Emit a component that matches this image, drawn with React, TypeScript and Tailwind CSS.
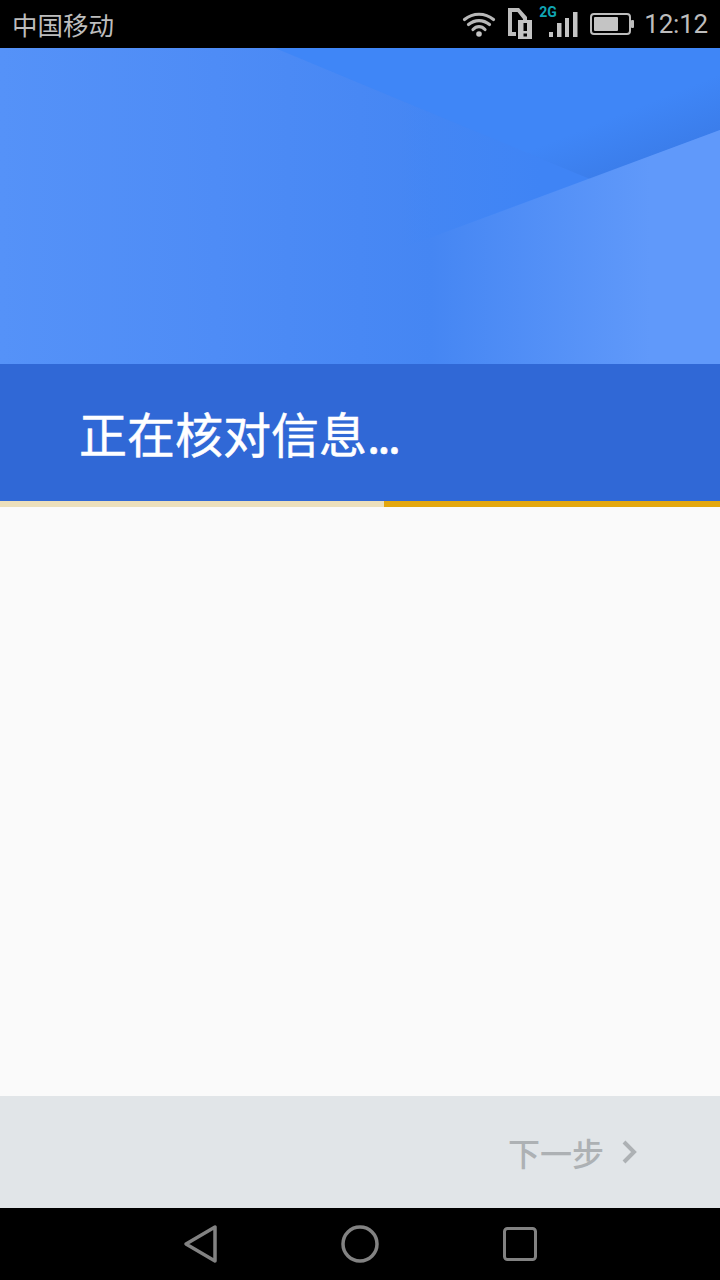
const cjk = "font-['Noto_Sans_CJK_SC','Roboto',sans-serif]";

// drawn with x measured from the left of the icon strip, which starts at 460
function StatusIcons() {
  return (
    <svg width="122" height="48" viewBox="0 0 122 48" fill="none" className="shrink-0">
      {/* wifi */}
      <g stroke="#b8b8b8" strokeWidth="3.200" strokeLinecap="round">
        <path d="M4.500 19.500c8.500-7 20.500-7 29 0" />
        <path d="M8.500 24.500c6.300-5.200 14.700-5.200 21 0" />
        <path d="M13 29.500c3.600-3.800 8.400-3.800 12 0" />
      </g>
      <circle cx="19" cy="34" r="2.800" fill="#c4c4c4" />
      {/* sim with alert */}
      <path d="M48 8h11l8 9v4h-4v-2L57.500 12H52v20h4v4h-8z" fill="#bdbdbd" />
      <path d="M58 20h14v19H58z" fill="#c4c4c4" />
      <path d="M63.500 23h3.500v8h-3.500zM63.500 33.500h3.500v3h-3.500z" fill="#000" />
      {/* signal */}
      <rect x="89" y="32" width="4" height="5" fill="#c4c4c4" />
      <rect x="97" y="23" width="4.500" height="14" fill="#c4c4c4" />
      <rect x="105" y="18" width="4" height="19" fill="#c4c4c4" />
      <rect x="113" y="12" width="4.500" height="25" fill="#c4c4c4" />
    </svg>
  );
}

function Battery() {
  return (
    <svg width="44" height="24" viewBox="0 0 44 24" fill="none" className="shrink-0">
      <rect x="1" y="2" width="39" height="20" rx="3" stroke="#bdbdbd" strokeWidth="2" />
      <rect x="4" y="5" width="24" height="14" rx="1" fill="#c4c4c4" />
      <rect x="41" y="8" width="3" height="8" rx="1" fill="#bdbdbd" />
    </svg>
  );
}

function HeroArt() {
  return (
    <svg viewBox="0 0 720 316" preserveAspectRatio="none" className="block w-full h-full">
      <defs>
        <linearGradient id="base" x1="0" y1="0" x2="1" y2="0">
          <stop offset="0" stopColor="#5592f8" />
          <stop offset="0.3" stopColor="#4e8cf6" />
          <stop offset="0.6" stopColor="#4586f3" />
          <stop offset="1" stopColor="#4586f3" />
        </linearGradient>
        <linearGradient id="fade" gradientUnits="userSpaceOnUse" x1="400" y1="0" x2="540" y2="0">
          <stop offset="0" stopColor="#3f86f7" stopOpacity="0" />
          <stop offset="1" stopColor="#3f84f5" />
        </linearGradient>
        <linearGradient id="darkEdge" gradientUnits="userSpaceOnUse" x1="660" y1="50" x2="680" y2="100">
          <stop offset="0" stopColor="#3877e2" stopOpacity="0" />
          <stop offset="1" stopColor="#3877e2" stopOpacity="0.6" />
        </linearGradient>
        <linearGradient id="light" gradientUnits="userSpaceOnUse" x1="430" y1="0" x2="650" y2="0">
          <stop offset="0" stopColor="#6099fa" stopOpacity="0" />
          <stop offset="1" stopColor="#6099fa" />
        </linearGradient>
      </defs>
      <rect width="720" height="316" fill="url(#base)" />
      <polygon points="275,0 720,0 720,82 590,131" fill="#3f86f7" />
      <polygon points="400,52 590,131 370,212" fill="url(#fade)" />
      <polygon points="500,94 720,0 720,82 590,131" fill="url(#darkEdge)" />
      <polygon points="720,82 370,212 400,316 720,316" fill="url(#light)" />
    </svg>
  );
}

export default function App() {
  return (
    <div className={`w-[720px] h-[1280px] flex flex-col bg-black overflow-hidden ${cjk}`}>
      <div className="h-12 shrink-0 flex items-center bg-black text-[#bdbdbd]">
        <span className="ml-3 text-[25.500px] leading-none">中国移动</span>
        <div className="ml-auto flex items-center h-12">
          <div className="relative w-[130px] h-12">
            <StatusIcons />
            <span className="absolute left-[79px] top-[5px] text-[14px] leading-none font-bold text-[#10a5b4] font-['Roboto',sans-serif]">
              2G
            </span>
          </div>
          <Battery />
          <span className="ml-[10px] mr-3 text-[26px] leading-none tracking-[-0.2px] font-['Roboto',sans-serif]">12:12</span>
        </div>
      </div>

      <div className="h-[316px] shrink-0">
        <HeroArt />
      </div>

      <div className="h-[137px] shrink-0 bg-[#3068d6] flex items-center pl-[79px] pb-[2px]">
        <h1 className="text-white text-[48px] leading-none font-normal [-webkit-text-stroke:0.5px_white]">
          正在核对信息<span className="tracking-[-3px]">...</span>
        </h1>
      </div>

      <div className="h-1.5 shrink-0 flex">
        <div className="w-[384px] bg-[#ecdfbb]" />
        <div className="flex-1 bg-[#e3a70f]" />
      </div>

      <div className="flex-1 bg-[#fafafa]" />

      <div className="h-28 shrink-0 bg-[#e1e5e8] flex items-center justify-end pr-[83px]">
        <span className="text-[32px] leading-none font-medium text-[#adb1b4]">下一步</span>
        <svg width="16" height="26" viewBox="0 0 16 26" fill="none" className="ml-[17px]">
          <path d="M3 3l10 10L3 23" stroke="#adb1b4" strokeWidth="4" />
        </svg>
      </div>

      <div className="h-[72px] shrink-0 bg-black flex items-center justify-center gap-[104px] pb-[1px]">
        <svg width="56" height="40" viewBox="0 0 56 40" fill="none">
          <path d="M43 3v34L14 20z" stroke="#828282" strokeWidth="3.500" strokeLinejoin="round" />
        </svg>
        <svg width="56" height="40" viewBox="0 0 56 40" fill="none">
          <circle cx="28" cy="20" r="17" stroke="#828282" strokeWidth="3.500" />
        </svg>
        <svg width="56" height="40" viewBox="0 0 56 40" fill="none">
          <rect x="12.500" y="4.500" width="31" height="31" rx="3" stroke="#828282" strokeWidth="3" />
        </svg>
      </div>
    </div>
  );
}
